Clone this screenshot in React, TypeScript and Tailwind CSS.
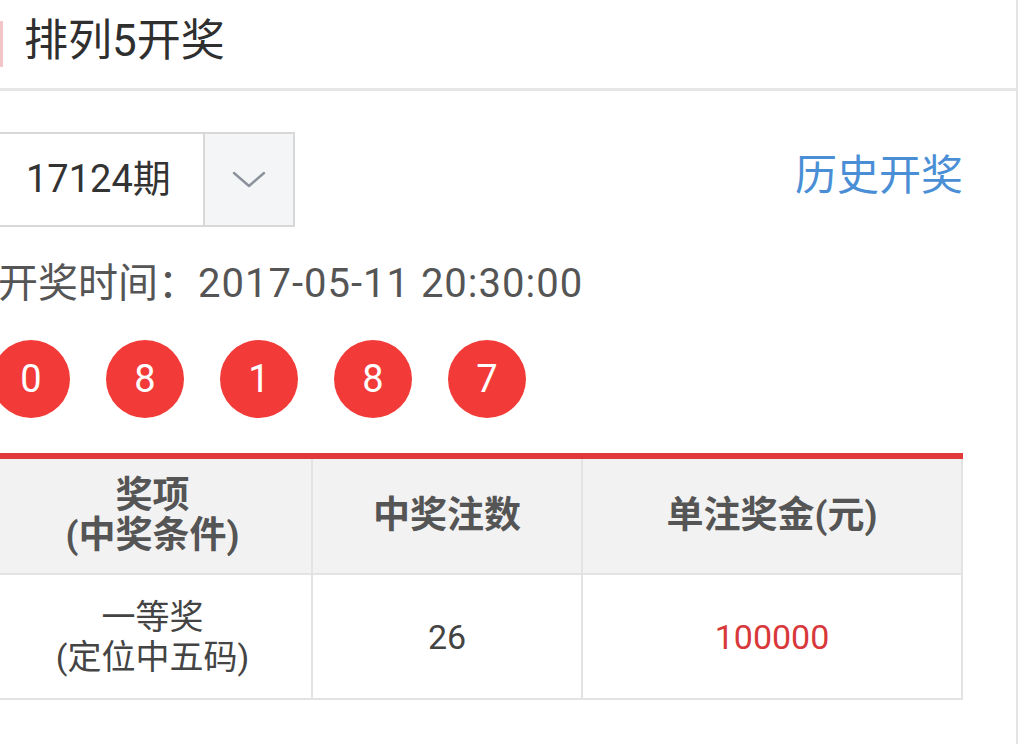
import React from 'react';

const balls = ['0', '8', '1', '8', '7'];

function Chevron() {
  return (
    <svg width="34" height="18" viewBox="0 0 34 18" fill="none">
      <path d="M2 2 L17 15 L32 2" stroke="#8c929b" strokeWidth="2.4" strokeLinecap="round" strokeLinejoin="round" />
    </svg>
  );
}

export default function App() {
  return (
    <div
      className="w-[1018px] h-[744px] overflow-hidden bg-white border-r-2 border-[#e4e4e4]"
      style={{ fontFamily: "Roboto, 'Noto Sans CJK SC', sans-serif" }}
    >
      <header className="h-[91px] flex items-center border-b-[3px] border-[#e6e6e6]">
        <div className="w-[3px] h-[46px] bg-[#f2c6c6]" />
        <h1 className="ml-[21px] mb-[6px] text-[44px] leading-none text-[#2f2f2f] font-normal">排列5开奖</h1>
      </header>

      <main className="ml-[-8px] w-[971px] pt-[41px]">
        <div className="flex items-center justify-between">
          <div className="flex h-[95px] border-2 border-[#d8d8d8] bg-white">
            <div className="w-[209px] flex items-center pl-[32px] text-[38px] text-[#333]">17124期</div>
            <div className="w-[90px] flex items-center justify-center bg-[#f4f5f7] border-l-2 border-[#d8d8d8]">
              <Chevron />
            </div>
          </div>
          <a className="mb-[8px] text-[42px] text-[#4a8fd6] leading-none">历史开奖</a>
        </div>

        <p className="mt-[33px] text-[40px] leading-[48px] text-[#555] pl-[6px] whitespace-nowrap">
          开奖时间：<span className="tracking-[1px]">2017-05-11 20:30:00</span>
        </p>

        <div className="mt-[32px] flex gap-[36px]">
          {balls.map((b, i) => (
            <div
              key={i}
              className="w-[78px] h-[78px] rounded-full bg-[#f23b38] flex items-center justify-center text-white text-[38px]"
            >
              {b}
            </div>
          ))}
        </div>

        <table className="mt-[35px] w-[971px] border-collapse border-t-[6px] border-t-[#e0393a] text-center">
          <thead>
            <tr className="bg-[#f2f2f2] h-[118px] text-[37px] leading-[40px] font-bold text-[#555]">
              <th className="w-[319px] border-2 border-t-0 border-[#e3e3e3] font-bold">
                奖项
                <br />
                (中奖条件)
              </th>
              <th className="w-[270px] border-2 border-t-0 border-[#e3e3e3] font-bold">中奖注数</th>
              <th className="border-2 border-t-0 border-[#e3e3e3] font-bold">单注奖金(元)</th>
            </tr>
          </thead>
          <tbody>
            <tr className="h-[125px] text-[34px] leading-[40px] text-[#444]">
              <td className="border-2 border-[#e3e3e3]">
                一等奖
                <br />
                (定位中五码)
              </td>
              <td className="border-2 border-[#e3e3e3]">26</td>
              <td className="border-2 border-[#e3e3e3] text-[#d8383a]">100000</td>
            </tr>
          </tbody>
        </table>
      </main>
    </div>
  );
}
